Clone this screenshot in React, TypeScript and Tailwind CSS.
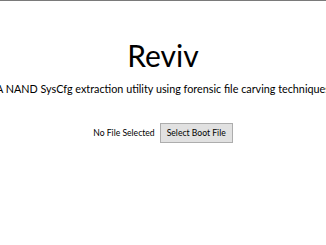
import React from 'react';

export default function App() {
  return (
    <div
      className="w-[326px] h-[245px] overflow-hidden bg-white border-t border-[#7a7a7a] flex flex-col items-center text-black"
      style={{ fontFamily: 'Lato, "Noto Sans", sans-serif' }}
    >
      <h1 className="mt-[36px] text-[30px] leading-[36px] font-normal">Reviv</h1>
      <p className="mt-[9px] text-[10.8px] leading-[14px] whitespace-nowrap">
        A NAND SysCfg extraction utility using forensic file carving techniques
      </p>
      <div className="mt-[27px] flex items-center gap-[5px]">
        <span className="text-[8.6px] leading-[12px]">No File Selected</span>
        <button className="h-[20px] px-[6px] border border-[#adadad] bg-[#e1e1e1] text-[8.6px] leading-[12px]">
          Select Boot File
        </button>
      </div>
    </div>
  );
}
